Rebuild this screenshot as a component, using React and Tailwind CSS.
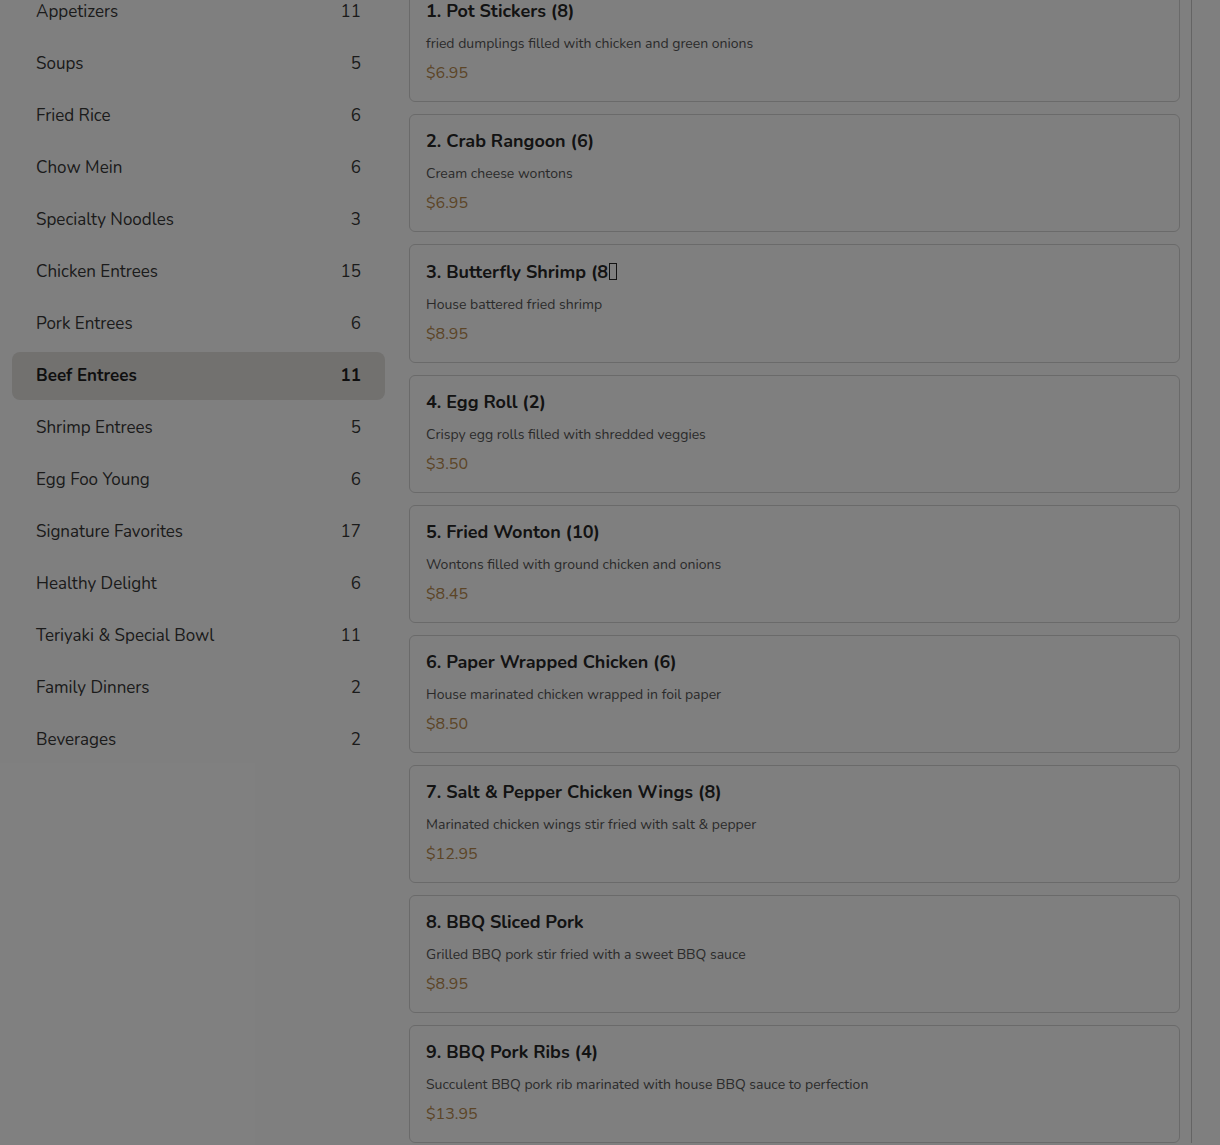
const categorias = [
  { nombre: "Appetizers", total: 11 },
  { nombre: "Soups", total: 5 },
  { nombre: "Fried Rice", total: 6 },
  { nombre: "Chow Mein", total: 6 },
  { nombre: "Specialty Noodles", total: 3 },
  { nombre: "Chicken Entrees", total: 15 },
  { nombre: "Pork Entrees", total: 6 },
  { nombre: "Beef Entrees", total: 11, activo: true },
  { nombre: "Shrimp Entrees", total: 5 },
  { nombre: "Egg Foo Young", total: 6 },
  { nombre: "Signature Favorites", total: 17 },
  { nombre: "Healthy Delight", total: 6 },
  { nombre: "Teriyaki & Special Bowl", total: 11 },
  { nombre: "Family Dinners", total: 2 },
  { nombre: "Beverages", total: 2 },
];

const platos = [
  { titulo: "1. Pot Stickers (8)", desc: "fried dumplings filled with chicken and green onions", precio: "$6.95" },
  { titulo: "2. Crab Rangoon (6)", desc: "Cream cheese wontons", precio: "$6.95" },
  { titulo: "3. Butterfly Shrimp (8", desc: "House battered fried shrimp", precio: "$8.95", raro: true },
  { titulo: "4. Egg Roll (2)", desc: "Crispy egg rolls filled with shredded veggies", precio: "$3.50" },
  { titulo: "5. Fried Wonton (10)", desc: "Wontons filled with ground chicken and onions", precio: "$8.45" },
  { titulo: "6. Paper Wrapped Chicken (6)", desc: "House marinated chicken wrapped in foil paper", precio: "$8.50" },
  { titulo: "7. Salt & Pepper Chicken Wings (8)", desc: "Marinated chicken wings stir fried with salt & pepper", precio: "$12.95" },
  { titulo: "8. BBQ Sliced Pork", desc: "Grilled BBQ pork stir fried with a sweet BBQ sauce", precio: "$8.95" },
  { titulo: "9. BBQ Pork Ribs (4)", desc: "Succulent BBQ pork rib marinated with house BBQ sauce to perfection", precio: "$13.95" },
];

function App() {
  return (
    <div className="relative h-[1145px] overflow-hidden bg-white font-['Nunito','Lato',sans-serif] text-[#262626]">
      <div className="mt-[-16px] flex">
        <aside className="w-[397px] shrink-0 px-3 pt-[4px]">
          <ul className="flex flex-col gap-1">
            {categorias.map((cat) => (
              <li
                key={cat.nombre}
                className={`flex h-12 items-center justify-between rounded-lg px-6 text-[17px] ${
                  cat.activo ? "bg-[#e4e2df] font-bold text-[#1f1f1f]" : "text-[#363636]"
                }`}
              >
                <span>{cat.nombre}</span>
                <span>{cat.total}</span>
              </li>
            ))}
          </ul>
        </aside>

        <main className="flex w-[795px] flex-col gap-3 border-r border-[#c8c8c8] pl-3 pr-[11px]">
          {platos.map((plato) => (
            <div
              key={plato.titulo}
              className="rounded-md border border-[#d4d4d4] px-4 py-4"
            >
              <h3 className="text-[18px] font-bold leading-5 text-[#262626]">
                {plato.titulo}
                {plato.raro && (
                  <span className="ml-[1px] inline-block h-[17px] w-[8px] translate-y-[2px] border border-[#262626]" />
                )}
              </h3>
              <p className="mt-[13px] text-[14px] leading-5 text-[#555555]">{plato.desc}</p>
              <p className="mt-[7px] text-[16px] leading-6 text-[#b88a4e]">{plato.precio}</p>
            </div>
          ))}
        </main>
      </div>

      <div className="absolute inset-0 bg-black/50" />
    </div>
  );
}

export default App;
